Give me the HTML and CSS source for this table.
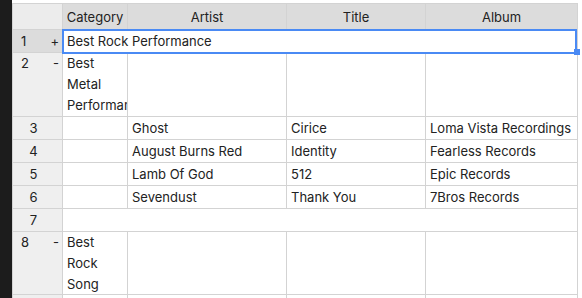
FILE: index.html
```html
<!DOCTYPE html>
<html>
<head>
<meta charset="utf-8">
<link rel="stylesheet" href="styles.css">
</head>
<body>
<div class="app">
  <div class="sidebar"></div>
  <div class="sheet">
    <div class="grid">
      <div class="corner"></div>
      <div class="head">Category</div>
      <div class="head">Artist</div>
      <div class="head">Title</div>
      <div class="head">Album</div>

      <div class="rn group selected"><span>1</span><span>+</span></div>
      <div class="cell span selbox">Best Rock Performance<i class="handle"></i></div>

      <div class="rn group tall"><span>2</span><span>-</span></div>
      <div class="cell wrap">Best Metal Performance</div>
      <div class="cell"></div>
      <div class="cell"></div>
      <div class="cell"></div>

      <div class="rn">3</div>
      <div class="cell"></div>
      <div class="cell">Ghost</div>
      <div class="cell">Cirice</div>
      <div class="cell">Loma Vista Recordings</div>

      <div class="rn">4</div>
      <div class="cell"></div>
      <div class="cell">August Burns Red</div>
      <div class="cell">Identity</div>
      <div class="cell">Fearless Records</div>

      <div class="rn">5</div>
      <div class="cell"></div>
      <div class="cell">Lamb Of God</div>
      <div class="cell">512</div>
      <div class="cell">Epic Records</div>

      <div class="rn">6</div>
      <div class="cell"></div>
      <div class="cell">Sevendust</div>
      <div class="cell">Thank You</div>
      <div class="cell">7Bros Records</div>

      <div class="rn">7</div>
      <div class="cell span"></div>

      <div class="rn group tall"><span>8</span><span>-</span></div>
      <div class="cell wrap">Best Rock Song</div>
      <div class="cell"></div>
      <div class="cell"></div>
      <div class="cell"></div>

      <div class="rn"></div>
      <div class="cell"></div>
      <div class="cell"></div>
      <div class="cell"></div>
      <div class="cell"></div>
    </div>
  </div>
</div>
</body>
</html>
```

FILE: styles.css
```css
html, body {
  margin: 0;
  padding: 0;
  background: #ffffff;
  overflow: hidden;
}
body {
  font-family: Inter, "Liberation Sans", sans-serif;
  font-size: 13px;
  color: #222222;
}
.app {
  display: flex;
  width: 582px;
  height: 298px;
  overflow: hidden;
}
.sidebar {
  width: 12px;
  flex: none;
  background: #1c1c1c;
}
.sheet {
  flex: none;
  padding-top: 3px;
}
.grid {
  display: grid;
  grid-template-columns: 49px 64px 158px 138px 151px;
  grid-template-rows: 25px 22px 63px 22px 22px 22px 22px 22px 62px 22px;
  gap: 1px;
  background: #d3d3d3;
  border: 1px solid #d3d3d3;
}
.corner {
  background: #ececec;
}
.head {
  background: #dcdcdc;
  text-align: center;
  line-height: 26px;
  white-space: nowrap;
  overflow: hidden;
}
.rn {
  background: #efefef;
  line-height: 22px;
  text-align: center;
  padding-right: 8px;
}
.rn.group {
  display: flex;
  justify-content: space-between;
  padding: 0 3px 0 8px;
  text-align: left;
}
.rn.tall {
  line-height: 21px;
}
.rn.selected {
  background: #dcdcdc;
}
.cell {
  background: #ffffff;
  padding: 0 4px;
  line-height: 22px;
  white-space: nowrap;
  overflow: hidden;
}
.cell.wrap {
  white-space: normal;
  line-height: 21px;
}
.cell.span {
  grid-column: 2 / 6;
}
.selbox {
  position: relative;
  overflow: visible;
}
.selbox::after {
  content: "";
  position: absolute;
  top: -1px;
  left: -1px;
  right: 0;
  bottom: -2px;
  border: 2px solid #4a8af4;
  pointer-events: none;
}
.handle {
  position: absolute;
  right: -3px;
  bottom: -3px;
  width: 6px;
  height: 6px;
  background: #4a8af4;
  z-index: 2;
}
```
